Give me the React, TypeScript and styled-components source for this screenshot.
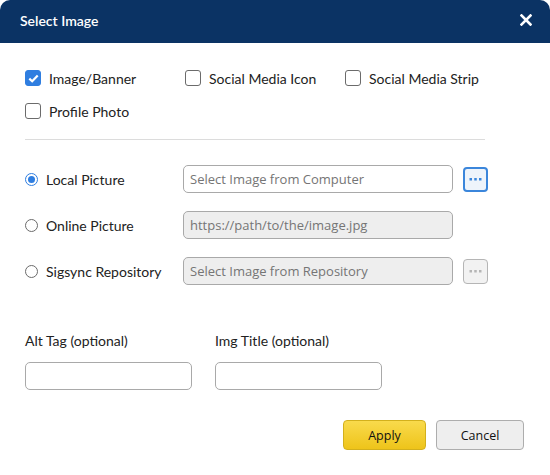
import React from "react";
import styled, { createGlobalStyle } from "styled-components";

const Global = createGlobalStyle`
  html, body { margin: 0; padding: 0; background: #ffffff; }
  body { font-family: Lato, "Liberation Sans", sans-serif; color: #222; }
  * { box-sizing: border-box; }
`;

const Dialog = styled.div`
  width: 550px;
  height: 475px;
  background: #fff;
  display: flex;
  flex-direction: column;
`;

const Header = styled.div`
  height: 43px;
  background: #0b3364;
  border-radius: 10px 10px 0 0;
  display: flex;
  align-items: center;
  justify-content: space-between;
  padding: 0 17px 2px 20px;
  color: #fff;
  font-size: 14px;
  font-weight: 600;
`;

const CloseBtn = styled.div`
  width: 14px;
  height: 14px;
  display: flex;
  align-items: center;
  justify-content: center;
  margin-top: -2px;
`;

const Body = styled.div`
  padding: 25px 26px 0 25px;
  display: flex;
  flex-direction: column;
`;

const CheckGrid = styled.div`
  display: grid;
  grid-template-columns: 160px 160px 160px;
  grid-auto-rows: 20px;
  row-gap: 13px;
`;

const Option = styled.label`
  display: flex;
  align-items: center;
  font-size: 14px;
  color: #222;
  gap: 8px;
`;

const Box = styled.span<{ $checked?: boolean }>`
  width: 16px;
  height: 16px;
  border-radius: 3px;
  border: 1px solid ${(p) => (p.$checked ? "#2f7ee0" : "#6b6b6b")};
  background: ${(p) => (p.$checked ? "#2f7ee0" : "#fff")};
  display: flex;
  align-items: center;
  justify-content: center;
  flex: none;
`;

const Divider = styled.div`
  width: 460px;
  height: 1px;
  background: #dcdcdc;
  margin-top: 18px;
`;

const SourceList = styled.div`
  display: flex;
  flex-direction: column;
  gap: 18px;
  margin-top: 25px;
`;

const SourceRow = styled.div`
  display: flex;
  align-items: center;
  height: 28px;
`;

const RadioLabel = styled.label`
  width: 158px;
  display: flex;
  align-items: center;
  gap: 8px;
  font-size: 14px;
  color: #222;
`;

const Radio = styled.span<{ $checked?: boolean }>`
  width: 13px;
  height: 13px;
  border-radius: 50%;
  border: 1px solid ${(p) => (p.$checked ? "#2f7ee0" : "#6b6b6b")};
  display: flex;
  align-items: center;
  justify-content: center;
  flex: none;
  &::after {
    content: "";
    display: ${(p) => (p.$checked ? "block" : "none")};
    width: 7px;
    height: 7px;
    border-radius: 50%;
    background: #2f7ee0;
  }
`;

const TextBox = styled.div<{ $disabled?: boolean; $width: number }>`
  width: ${(p) => p.$width}px;
  height: 28px;
  border: 1px solid #a9a9a9;
  border-radius: 5px;
  background: ${(p) => (p.$disabled ? "#eeeeee" : "#fff")};
  display: flex;
  align-items: center;
  padding: 0 6px;
  font-family: "Open Sans", "Noto Sans", sans-serif;
  font-size: 13px;
  color: #757575;
  flex: none;
`;

const DotsButton = styled.div<{ $disabled?: boolean }>`
  width: 25px;
  height: 25px;
  margin-left: 10px;
  border-radius: 4px;
  border: ${(p) => (p.$disabled ? "1px solid #b5b5b5" : "2px solid #3b86db")};
  background: ${(p) => (p.$disabled ? "#f2f2f2" : "#eef4fb")};
  display: flex;
  align-items: center;
  justify-content: center;
`;

const Fields = styled.div`
  display: flex;
  gap: 23px;
  margin-top: 47px;
`;

const Field = styled.div`
  display: flex;
  flex-direction: column;
  gap: 13px;
`;

const FieldLabel = styled.div`
  font-size: 14px;
  line-height: 17px;
  color: #222;
`;

const Footer = styled.div`
  display: flex;
  justify-content: flex-end;
  gap: 10px;
  margin-top: 30px;
`;

const Button = styled.button<{ $primary?: boolean; $width: number }>`
  width: ${(p) => p.$width}px;
  height: 30px;
  border-radius: 4px;
  border: 1px solid ${(p) => (p.$primary ? "#d3b01c" : "#adadad")};
  background: ${(p) =>
    p.$primary ? "linear-gradient(#f9da4c, #eec41a)" : "#eeeeee"};
  font-family: "Open Sans", "Noto Sans", sans-serif;
  font-size: 12.5px;
  color: #111;
  padding: 0;
`;

const Check = () => (
  <svg width="11" height="9" viewBox="0 0 11 9">
    <path d="M1.3 4.6 L4.2 7.3 L9.7 1.5" fill="none" stroke="#fff" strokeWidth="2.2" />
  </svg>
);

const Dots = ({ color }: { color: string }) => (
  <svg width="13" height="3" viewBox="0 0 13 3">
    <rect x="0.5" y="0" width="2.5" height="2.5" fill={color} />
    <rect x="5.25" y="0" width="2.5" height="2.5" fill={color} />
    <rect x="10" y="0" width="2.5" height="2.5" fill={color} />
  </svg>
);

const checks = [
  { label: "Image/Banner", checked: true },
  { label: "Social Media Icon", checked: false },
  { label: "Social Media Strip", checked: false },
  { label: "Profile Photo", checked: false },
];

const sources = [
  { label: "Local Picture", text: "Select Image from Computer", checked: true, disabled: false, button: true },
  { label: "Online Picture", text: "https://path/to/the/image.jpg", checked: false, disabled: true, button: false },
  { label: "Sigsync Repository", text: "Select Image from Repository", checked: false, disabled: true, button: true },
];

export default function App() {
  return (
    <>
      <Global />
      <Dialog>
        <Header>
          <span>Select Image</span>
          <CloseBtn>
            <svg width="12" height="12" viewBox="0 0 12 12">
              <path d="M1.5 1.5 L10.5 10.5 M10.5 1.5 L1.5 10.5" stroke="#fff" strokeWidth="2.6" strokeLinecap="square" />
            </svg>
          </CloseBtn>
        </Header>
        <Body>
          <CheckGrid>
            {checks.map((c) => (
              <Option key={c.label}>
                <Box $checked={c.checked}>{c.checked && <Check />}</Box>
                {c.label}
              </Option>
            ))}
          </CheckGrid>
          <Divider />
          <SourceList>
            {sources.map((s) => (
              <SourceRow key={s.label}>
                <RadioLabel>
                  <Radio $checked={s.checked} />
                  {s.label}
                </RadioLabel>
                <TextBox $width={270} $disabled={s.disabled}>{s.text}</TextBox>
                {s.button && (
                  <DotsButton $disabled={s.disabled}>
                    <Dots color={s.disabled ? "#b5b5b5" : "#3b86db"} />
                  </DotsButton>
                )}
              </SourceRow>
            ))}
          </SourceList>
          <Fields>
            <Field>
              <FieldLabel>Alt Tag (optional)</FieldLabel>
              <TextBox $width={167} />
            </Field>
            <Field>
              <FieldLabel>Img Title (optional)</FieldLabel>
              <TextBox $width={167} />
            </Field>
          </Fields>
          <Footer>
            <Button $primary $width={83}>Apply</Button>
            <Button $width={88}>Cancel</Button>
          </Footer>
        </Body>
      </Dialog>
    </>
  );
}
